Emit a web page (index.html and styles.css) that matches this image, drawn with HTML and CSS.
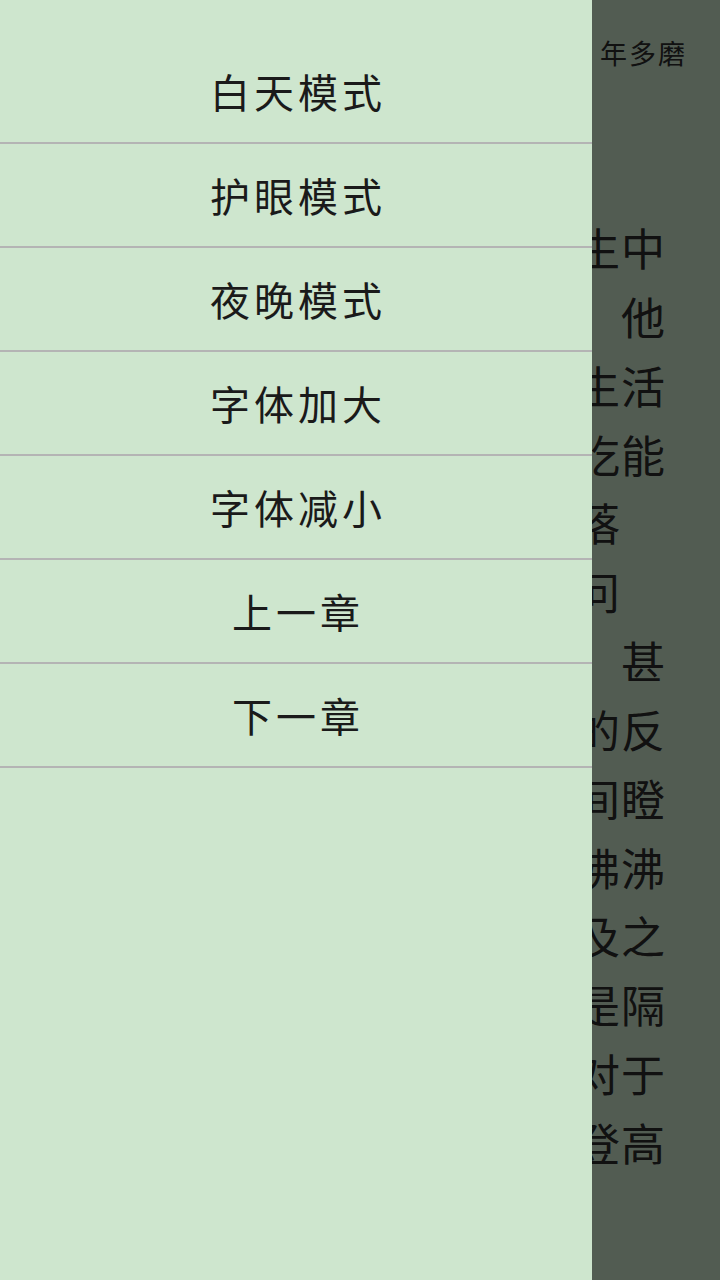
FILE: index.html
```html
<!DOCTYPE html>
<html lang="zh-CN">
<head>
<meta charset="utf-8">
<title>阅读</title>
<link rel="stylesheet" href="styles.css">
</head>
<body>
<div class="screen">
  <main class="reader">
    <div class="title">第一章　年多磨</div>
    <div class="content">
      <div class="line">生中</div>
      <div class="line">，他</div>
      <div class="line">生活</div>
      <div class="line">吃能</div>
      <div class="line">落</div>
      <div class="line">问</div>
      <div class="line">，甚</div>
      <div class="line">的反</div>
      <div class="line">间瞪</div>
      <div class="line">佛沸</div>
      <div class="line">及之</div>
      <div class="line">是隔</div>
      <div class="line">对于</div>
      <div class="line">登高</div>
    </div>
  </main>
  <div class="scrim"></div>
  <nav class="drawer">
    <div class="item">白天模式</div>
    <div class="item">护眼模式</div>
    <div class="item">夜晚模式</div>
    <div class="item">字体加大</div>
    <div class="item">字体减小</div>
    <div class="item">上一章</div>
    <div class="item">下一章</div>
  </nav>
</div>
</body>
</html>
```

FILE: styles.css
```css
* {
  box-sizing: border-box;
}

html, body {
  margin: 0;
  padding: 0;
}

body {
  width: 720px;
  height: 1280px;
  overflow: hidden;
  font-family: "Noto Sans CJK SC", "Noto Sans", sans-serif;
}

.screen {
  position: relative;
  width: 720px;
  height: 1280px;
  overflow: hidden;
}

.reader {
  width: 720px;
  height: 1280px;
  background: #cee6ce;
  color: #2b2b2b;
  display: flex;
  flex-direction: column;
}

.title {
  margin-top: 33px;
  height: 40px;
  line-height: 40px;
  font-size: 27px;
  letter-spacing: 2px;
  text-align: right;
  padding-right: 33px;
  white-space: nowrap;
}

.content {
  margin-top: 140px;
  padding-left: 576px;
  display: flex;
  flex-direction: column;
}

.line {
  height: 68.85px;
  line-height: 68.85px;
  font-size: 44px;
  letter-spacing: 1px;
  white-space: pre;
}

.scrim {
  position: absolute;
  inset: 0;
  background: rgba(0, 0, 0, 0.6);
}

.drawer {
  position: absolute;
  left: 0;
  top: 0;
  width: 592px;
  height: 1280px;
  background: #cee6ce;
  padding-top: 40px;
  display: flex;
  flex-direction: column;
}

.item {
  height: 104px;
  border-bottom: 2px solid #b4b4b4;
  display: flex;
  align-items: center;
  justify-content: center;
  padding-left: 4px;
  font-size: 40px;
  letter-spacing: 4px;
  color: #1a1a1a;
  white-space: nowrap;
}
```
